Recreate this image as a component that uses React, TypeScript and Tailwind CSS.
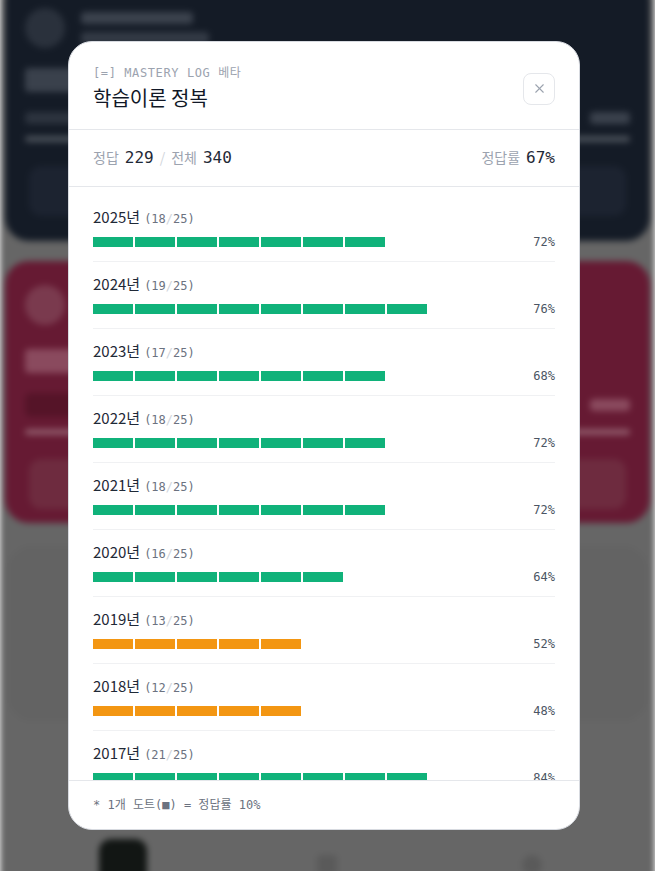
import { X } from 'lucide-react';

interface YearLog {
  year: number;
  correct: number;
  total: number;
}

const logs: YearLog[] = [
  { year: 2025, correct: 18, total: 25 },
  { year: 2024, correct: 19, total: 25 },
  { year: 2023, correct: 17, total: 25 },
  { year: 2022, correct: 18, total: 25 },
  { year: 2021, correct: 18, total: 25 },
  { year: 2020, correct: 16, total: 25 },
  { year: 2019, correct: 13, total: 25 },
  { year: 2018, correct: 12, total: 25 },
  { year: 2017, correct: 21, total: 25 },
  { year: 2016, correct: 20, total: 25 },
  { year: 2015, correct: 17, total: 25 },
];

const sans = "font-['Noto_Sans_CJK_KR','Noto_Sans',sans-serif]";
const mono = "font-['DejaVu_Sans_Mono','Noto_Sans_CJK_KR',monospace]";

function BackdropPage() {
  return (
    <div className="min-h-[871px] bg-[#666666] px-[5px] blur-[3px]">
      {/* dark card */}
      <div className="-mt-6 h-[265px] rounded-3xl bg-[#141b26] px-5 pt-8">
        <div className="flex items-center gap-4">
          <div className="h-10 w-10 rounded-full bg-[#2a313c]" />
          <div className="flex flex-col gap-2">
            <div className="h-3 w-28 rounded bg-[#3b424d]" />
            <div className="h-3 w-32 rounded bg-[#333a45]" />
          </div>
        </div>
        <div className="mt-5 h-6 w-40 rounded bg-[#3a414c]" />
        <div className="mt-5 flex items-center justify-between">
          <div className="h-3 w-24 rounded bg-[#2c333e]" />
          <div className="h-3 w-10 rounded bg-[#3a414c]" />
        </div>
        <div className="mt-3 h-[6px] rounded-full bg-[#4a5059]" />
        <div className="mt-6 mx-1 h-[50px] rounded-xl bg-[#1c2330]" />
      </div>

      {/* pink card */}
      <div className="mt-[20px] h-[262px] rounded-3xl bg-[#661a33] px-5 pt-6">
        <div className="flex items-center gap-4">
          <div className="h-10 w-10 rounded-full bg-[#7a3a4e]" />
        </div>
        <div className="mt-6 h-6 w-36 rounded bg-[#8a4a5e]" />
        <div className="mt-5 flex items-center justify-between">
          <div className="h-6 w-40 rounded-md bg-[#551428]" />
          <div className="h-3 w-10 rounded bg-[#8a4a5e]" />
        </div>
        <div className="mt-3 h-[6px] rounded-full bg-[#8e5868]" />
        <div className="mt-6 mx-1 h-[50px] rounded-xl bg-[#6e2b3f]" />
      </div>

      {/* grey card */}
      <div className="mx-[3px] mt-[23px] h-[175px] rounded-3xl bg-[#636363]" />

      {/* bottom nav */}
      <div className="mt-[118px] grid grid-cols-3 justify-items-center px-[16px]">
        <div className="h-12 w-12 rounded-xl bg-[#121614]" />
        <div className="mt-4 h-5 w-5 rounded bg-[#5a5a5a]" />
        <div className="mt-4 h-5 w-5 rounded-full bg-[#5a5a5a]" />
      </div>
    </div>
  );
}

function DotBar({ rate }: { rate: number }) {
  const dots = Math.round(rate / 10);
  const color = rate >= 60 ? 'bg-[#10b27a]' : 'bg-[#f39612]';
  return (
    <div className="flex gap-[2px]">
      {Array.from({ length: dots }).map((_, i) => (
        <div key={i} className={`h-[10px] w-[40px] ${color}`} />
      ))}
    </div>
  );
}

export default function App() {
  const correct = 229;
  const total = 340;
  const overall = Math.round((correct / total) * 100);

  return (
    <div className={`relative h-[871px] overflow-hidden ${sans}`}>
      <BackdropPage />

      <div className="absolute inset-0 flex items-center">
        <div className="ml-[68px] flex h-[789px] w-[512px] flex-col overflow-hidden rounded-3xl border border-[#d7dae0] bg-white">
          {/* header */}
          <div className="flex items-center justify-between border-b border-[#e5e7eb] px-6 pb-[17px] pt-[23px]">
            <div>
              <p className={`h-4 text-xs leading-4 tracking-wider text-[#9ca3af] ${mono}`}>[=] MASTERY LOG 베타</p>
              <h2 className="mt-[3px] h-7 text-xl leading-7 font-normal text-[#111827]">학습이론 정복</h2>
            </div>
            <button className="flex h-8 w-8 items-center justify-center rounded-lg border border-[#e5e7eb] text-[#9ca3af]">
              <X size={15} strokeWidth={1.75} />
            </button>
          </div>

          {/* stats */}
          <div className="flex h-[57px] items-center justify-between border-b border-[#e5e7eb] px-6">
            <div className="flex items-baseline gap-[6px]">
              <span className="text-sm text-[#9ca3af]">정답</span>
              <span className={`text-base text-[#1f2937] ${mono}`}>{correct}</span>
              <span className="text-sm text-[#d1d5db]">/</span>
              <span className="text-sm text-[#9ca3af]">전체</span>
              <span className={`text-base text-[#1f2937] ${mono}`}>{total}</span>
            </div>
            <div className="flex items-baseline gap-[6px]">
              <span className="text-sm text-[#9ca3af]">정답률</span>
              <span className={`text-base text-[#1f2937] ${mono}`}>{overall}%</span>
            </div>
          </div>

          {/* list */}
          <div className="flex-1 overflow-hidden px-6 pt-2">
            {logs.map((log, idx) => {
              const rate = Math.round((log.correct / log.total) * 100);
              return (
                <div
                  key={log.year}
                  className={`pb-[14px] pt-3 ${idx < logs.length - 1 ? 'border-b border-[#f0f1f3]' : ''}`}
                >
                  <div className="flex h-5 items-baseline leading-5">
                    <span className="text-[15px] text-[#1f2937]">{log.year}년</span>
                    <span className={`ml-1 text-xs text-[#6b7280] ${mono}`}>
                      ({log.correct}<span className="text-[#d1d5db]">/</span>{log.total})
                    </span>
                  </div>
                  <div className="mt-[10px] flex h-[10px] items-center justify-between">
                    <DotBar rate={rate} />
                    <span className={`text-xs text-[#4b5563] ${mono}`}>{rate}%</span>
                  </div>
                </div>
              );
            })}
          </div>

          {/* footer */}
          <div className="border-t border-[#e5e7eb] px-6 py-4">
            <p className={`h-4 text-xs leading-4 text-[#6b7280] ${mono}`}>* 1개 도트(■) = 정답률 10%</p>
          </div>
        </div>
      </div>
    </div>
  );
}
